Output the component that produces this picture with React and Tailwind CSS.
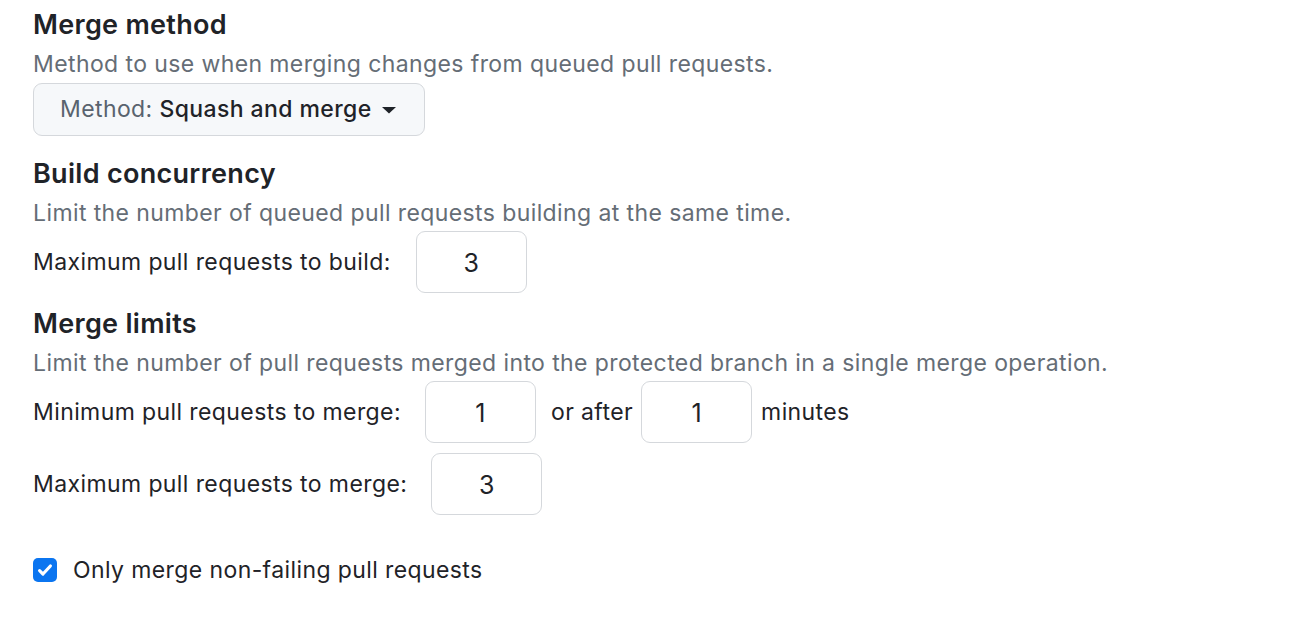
import React from "react";

const font = { fontFamily: "Inter, 'Noto Sans', sans-serif" };

function NumBox({ value }) {
  return (
    <div className="flex h-[62px] w-[111px] items-center justify-center rounded-[9px] border border-[#d5d8dc] bg-white pt-[3px] text-[25px] tracking-normal text-[#1f2328]">
      {value}
    </div>
  );
}

function Heading({ children, className = "" }) {
  return (
    <h2 className={`text-[27px] font-semibold leading-[36px] tracking-[0.3px] text-[#1f2328] ${className}`}>
      {children}
    </h2>
  );
}

function Desc({ children }) {
  return <p className="mt-[6px] text-[23px] leading-[30px] tracking-[0.4px] text-[#656d76]">{children}</p>;
}

export default function App() {
  return (
    <div className="h-[620px] w-[1310px] bg-white px-[33px] pt-[7px]" style={font}>
      <Heading>Merge method</Heading>
      <Desc>Method to use when merging changes from queued pull requests.</Desc>
      <button className="mt-[4px] flex h-[53px] items-center rounded-[9px] border border-[#d5d8dc] bg-[#f6f8fa] pl-[26px] pr-[27px] text-[23px] tracking-[0.4px]">
        <span className="text-[#59636e]">Method:&nbsp;</span>
        <span className="font-medium text-[#1f2328]">Squash and merge</span>
        <svg className="ml-[9px]" width="16" height="16" viewBox="0 0 16 16" fill="#1f2328">
          <path d="M1 5h14L8 11.5z" />
        </svg>
      </button>

      <Heading className="mt-[20px]">Build concurrency</Heading>
      <Desc>Limit the number of queued pull requests building at the same time.</Desc>
      <div className="mt-[3px] flex items-center text-[23px] tracking-[0.4px] text-[#1f2328]">
        <span className="mr-[25px]">Maximum pull requests to build:</span>
        <NumBox value="3" />
      </div>

      <Heading className="mt-[13px]">Merge limits</Heading>
      <Desc>Limit the number of pull requests merged into the protected branch in a single merge operation.</Desc>
      <div className="mt-[3px] flex items-center text-[23px] tracking-[0.4px] text-[#1f2328]">
        <span className="mr-[24px]">Minimum pull requests to merge:</span>
        <NumBox value="1" />
        <span className="ml-[15px] mr-[8px]">or after</span>
        <NumBox value="1" />
        <span className="ml-[9px]">minutes</span>
      </div>
      <div className="mt-[10px] flex items-center text-[23px] tracking-[0.4px] text-[#1f2328]">
        <span className="mr-[24px]">Maximum pull requests to merge:</span>
        <NumBox value="3" />
      </div>

      <label className="mt-[38px] flex items-center text-[23px] tracking-[0.4px] text-[#1f2328]">
        <span className="flex h-[24px] w-[24px] items-center justify-center rounded-[5px] bg-[#0b75f0]">
          <svg width="18" height="18" viewBox="0 0 16 16" fill="none" stroke="white" strokeWidth="2.8" strokeLinecap="round" strokeLinejoin="round">
            <path d="M3.2 8.6l3 3L12.8 4.4" />
          </svg>
        </span>
        <span className="ml-[16px]">Only merge non-failing pull requests</span>
      </label>
    </div>
  );
}
